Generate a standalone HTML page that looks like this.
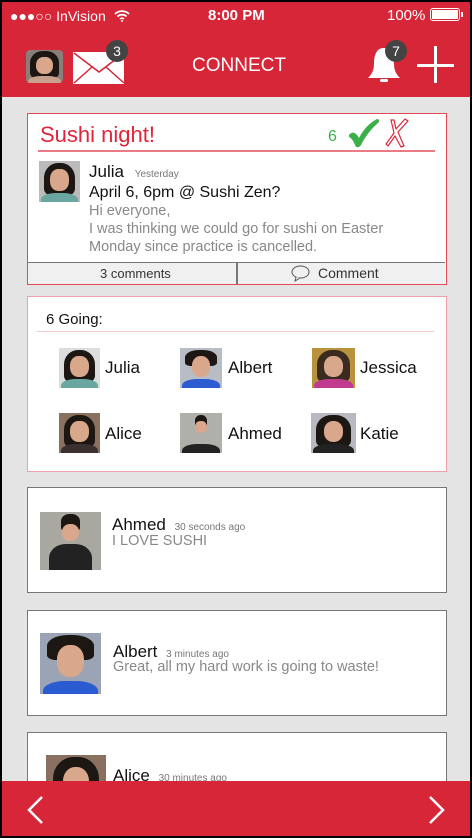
<!DOCTYPE html>
<html><head><meta charset="utf-8"><style>
*{margin:0;padding:0;box-sizing:border-box}
body{width:472px;height:838px;overflow:hidden;background:#000;font-family:"Liberation Sans",sans-serif;position:relative}
.screen{position:absolute;left:2px;top:2px;width:468px;height:834px;background:#e4e4e4;overflow:hidden}
.abs{position:absolute}
.hdr{left:0;top:0;width:468px;height:95px;background:#d62638}
.w{color:#fff}
.card{position:absolute;left:25px;width:420px;background:#fff;border:1.5px solid #777}
.av{position:absolute;overflow:hidden;background:#c9c3b8}
.av .hair{position:absolute;left:12%;top:4%;width:76%;height:80%;background:#1d1714;border-radius:45% 45% 20% 20%}
.av .face{position:absolute;left:28%;top:20%;width:44%;height:52%;background:#d9a78b;border-radius:45%}
.av .body{position:absolute;left:5%;top:78%;width:90%;height:40%;background:#222;border-radius:40% 40% 0 0}
.nm{position:absolute;font-size:17px;color:#111}
.gray{color:#777}
.badge{position:absolute;width:22px;height:22px;border-radius:50%;background:#444;color:#fff;font-size:14px;text-align:center;line-height:22px}
</style></head><body><div class="screen">
<div class="abs hdr"></div>
<div class="abs w" style="left:8px;top:6px;font-size:14px">●●●○○ InVision</div>
<svg class="abs" style="left:112px;top:7px" width="16" height="13" viewBox="0 0 16 13"><path d="M1 5a10 10 0 0 1 14 0M3.5 7.5a6.5 6.5 0 0 1 9 0M6 10a3 3 0 0 1 4 0" stroke="#fff" stroke-width="1.8" fill="none"/><circle cx="8" cy="12" r="1" fill="#fff"/></svg>
<div class="abs w" style="left:206px;top:5px;font-size:15px;font-weight:bold">8:00 PM</div>
<div class="abs w" style="left:385px;top:5px;font-size:15px">100%</div>
<div class="abs" style="left:428px;top:6px;width:30px;height:13px;border:1.5px solid #fff;border-radius:3px;padding:1px"><div style="background:#fff;width:100%;height:100%"></div></div>
<div class="abs" style="left:459px;top:10px;width:2px;height:5px;background:#fff"></div>
<div class="av" style="left:24px;top:48px;width:37px;height:33px;border-radius:4px;background:#8a7e78"><div class="hair"></div><div class="face"></div><div class="body" style="background:#c8a090"></div></div>
<svg class="abs" style="left:71px;top:50px" width="52" height="32" viewBox="0 0 52 32"><rect x="0" y="0" width="51" height="32" fill="#fff"/><path d="M1 1L26 20L51 1M1 31L19 15M51 31L33 15" stroke="#d62638" stroke-width="1.5" fill="none"/></svg>
<div class="badge" style="left:104px;top:38px">3</div>
<div class="abs w" style="left:190px;top:53px;font-size:19px">CONNECT</div>
<svg class="abs" style="left:364px;top:44px" width="36" height="38" viewBox="0 0 36 38"><path d="M18 2C10 2 8 10 8 18C8 25 5 29 2 32H34C31 29 28 25 28 18C28 10 26 2 18 2Z" fill="#fff"/><rect x="14" y="33" width="8" height="3" rx="1.5" fill="#fff"/></svg>
<div class="badge" style="left:383px;top:38px">7</div>
<div class="abs" style="left:415px;top:62px;width:37px;height:3px;background:#fff"></div>
<div class="abs" style="left:432px;top:44px;width:3px;height:37px;background:#fff"></div>

<div class="card" style="top:111px;height:172px;border-color:#e24a58">
 <div class="abs" style="left:12px;top:8px;font-size:22px;color:#e0253a">Sushi night!</div>
 <div class="abs" style="left:300px;top:14px;font-size:16px;color:#3bb04a">6</div>
 <svg class="abs" style="left:318px;top:4px" width="34" height="30" viewBox="0 0 34 30"><path d="M3 17C6 13 10 14 13 20C17 12 23 5 31 1C33 1 34 3 32 5C25 11 19 19 15 27C13 30 10 30 9 27C7 22 5 20 3 19Z" fill="#3bb04a"/></svg>
 <svg class="abs" style="left:356px;top:3px" width="26" height="32" viewBox="0 0 26 32"><path d="M7 3L10 3L12 12L21 2L24 4L14 15L20 29L17 30L11 19L4 29L2 27L10 16Z" fill="#fff" stroke="#e0253a" stroke-width="1.2" stroke-linejoin="round"/></svg>
 <div class="abs" style="left:10px;top:36px;width:397px;height:2px;background:#ea7b85"></div>
 <div class="av" style="left:11px;top:47px;width:41px;height:41px;background:#bbb"><div class="hair"></div><div class="face"></div><div class="body" style="background:#6aa7a0"></div></div>
 <div class="nm" style="left:61px;top:48px">Julia <span style="font-size:10px;color:#777;margin-left:6px">Yesterday</span></div>
 <div class="nm" style="left:61px;top:70px;font-size:16px">April 6, 6pm @ Sushi Zen?</div>
 <div class="abs gray" style="left:61px;top:88px;font-size:14.5px;line-height:18px;color:#888">Hi everyone,<br>I was thinking we could go for sushi on Easter<br>Monday since practice is cancelled.</div>
 <div class="abs" style="left:0;top:148px;width:417px;height:22px;background:#f0f0f0;border-top:1.5px solid #777"></div>
 <div class="abs" style="left:208px;top:148px;width:1.5px;height:22px;background:#777"></div>
 <div class="abs" style="left:72px;top:152px;font-size:13px;color:#333">3 comments</div>
 <svg class="abs" style="left:263px;top:151px" width="19" height="17" viewBox="0 0 19 17"><ellipse cx="9.5" cy="7" rx="8.5" ry="6" fill="none" stroke="#555"/><path d="M5 12L4 16L9 13" fill="#f0f0f0" stroke="#555"/></svg>
 <div class="abs" style="left:290px;top:151px;font-size:14px;color:#333">Comment</div>
</div>

<div class="card" style="top:294px;height:176px;border-color:#eea0a8">
 <div class="abs" style="left:18px;top:14px;font-size:15px;color:#111">6 Going:</div>
 <div class="abs" style="left:9px;top:34px;width:397px;height:1px;background:#f3c8cd"></div>
 <div class="av" style="left:31px;top:51px;width:41px;height:40px;background:#ddd"><div class="hair"></div><div class="face"></div><div class="body" style="background:#6aa7a0"></div></div>
 <div class="nm" style="left:77px;top:61px">Julia</div>
 <div class="av" style="left:152px;top:51px;width:42px;height:40px;background:#b8bcc4"><div class="hair" style="height:40%"></div><div class="face"></div><div class="body" style="background:#2a5bd0"></div></div>
 <div class="nm" style="left:200px;top:61px">Albert</div>
 <div class="av" style="left:284px;top:51px;width:43px;height:40px;background:#b8923c"><div class="hair" style="background:#3a2a20"></div><div class="face"></div><div class="body" style="background:#c03a90"></div></div>
 <div class="nm" style="left:332px;top:61px">Jessica</div>
 <div class="av" style="left:31px;top:116px;width:41px;height:40px;background:#8a7060"><div class="hair"></div><div class="face"></div><div class="body" style="background:#3a3030"></div></div>
 <div class="nm" style="left:77px;top:127px">Alice</div>
 <div class="av" style="left:152px;top:116px;width:42px;height:40px;background:#b0b0aa"><div class="hair" style="left:35%;width:30%;height:30%"></div><div class="face" style="left:36%;width:28%;height:30%"></div><div class="body"></div></div>
 <div class="nm" style="left:200px;top:127px">Ahmed</div>
 <div class="av" style="left:283px;top:116px;width:45px;height:40px;background:#b8b8c0"><div class="hair"></div><div class="face"></div><div class="body"></div></div>
 <div class="nm" style="left:332px;top:127px">Katie</div>
</div>

<div class="card" style="top:485px;height:106px">
 <div class="av" style="left:12px;top:24px;width:61px;height:58px;background:#a8a8a0"><div class="hair" style="left:35%;width:30%;height:28%"></div><div class="face" style="left:36%;width:28%;height:30%"></div><div class="body" style="left:15%;width:70%;top:55%;height:60%"></div></div>
 <div class="nm" style="left:84px;top:27px">Ahmed <span style="font-size:10px;color:#777;margin-left:4px">30 seconds ago</span></div>
 <div class="abs" style="left:84px;top:45px;font-size:14.5px;color:#888">I LOVE SUSHI</div>
</div>

<div class="card" style="top:608px;height:106px">
 <div class="av" style="left:12px;top:22px;width:61px;height:61px;background:#9aa4b4"><div class="hair" style="height:40%"></div><div class="face"></div><div class="body" style="background:#2a5bd0"></div></div>
 <div class="nm" style="left:85px;top:31px">Albert <span style="font-size:10px;color:#777;margin-left:4px">3 minutes ago</span></div>
 <div class="abs" style="left:85px;top:48px;font-size:14.5px;color:#888">Great, all my hard work is going to waste!</div>
</div>

<div class="card" style="top:730px;height:120px">
 <div class="av" style="left:18px;top:22px;width:60px;height:60px;background:#8a7060"><div class="hair"></div><div class="face"></div></div>
 <div class="nm" style="left:85px;top:33px">Alice <span style="font-size:10px;color:#777;margin-left:4px">30 minutes ago</span></div>
</div>

<div class="abs" style="left:0;top:779px;width:468px;height:55px;background:#d62638"></div>
<svg class="abs" style="left:24px;top:793px" width="20" height="30" viewBox="0 0 20 30"><path d="M16 2L3 15L16 28" stroke="#fff" stroke-width="2.5" fill="none"/></svg>
<svg class="abs" style="left:424px;top:793px" width="20" height="30" viewBox="0 0 20 30"><path d="M4 2L17 15L4 28" stroke="#fff" stroke-width="2.5" fill="none"/></svg>
</div></body></html>
